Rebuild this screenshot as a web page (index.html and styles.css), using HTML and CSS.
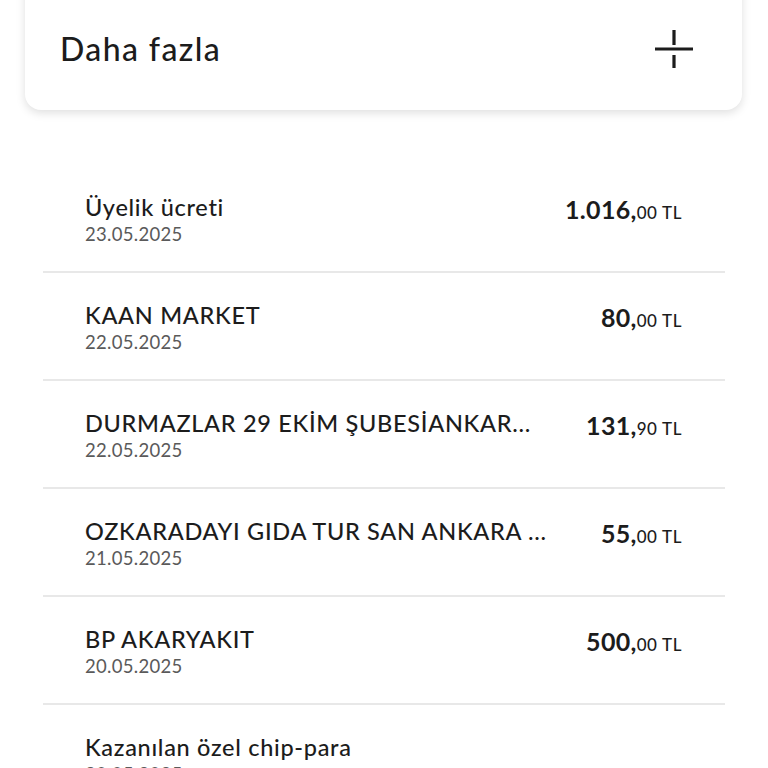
FILE: index.html
```html
<!DOCTYPE html>
<html>
<head>
    <meta http-equiv="Content-Type" content="text/html; charset=utf-8" />
    <title>Hesap hareketleri</title>
    <link rel="stylesheet" href="styles.css">
</head>
<body>
  <div class="page">
    <div class="more-card">
      <span class="more-title">Daha fazla</span>
      <svg class="plus-icon" width="38" height="38" viewBox="0 0 38 38">
        <path d="M19 0 V15 M0 19 H38 M19 25 V38" stroke="#1c1c1c" stroke-width="3.2" fill="none"/>
      </svg>
    </div>

    <div class="tx-list">
      <div class="tx-row">
        <div class="tx-info">
          <div class="tx-title">Üyelik ücreti</div>
          <div class="tx-date">23.05.2025</div>
        </div>
        <div class="tx-amount">1.016,<span class="tx-cents">00 TL</span></div>
      </div>
      <div class="tx-row">
        <div class="tx-info">
          <div class="tx-title">KAAN MARKET</div>
          <div class="tx-date">22.05.2025</div>
        </div>
        <div class="tx-amount">80,<span class="tx-cents">00 TL</span></div>
      </div>
      <div class="tx-row">
        <div class="tx-info">
          <div class="tx-title">DURMAZLAR 29 EKİM ŞUBESİANKAR...</div>
          <div class="tx-date">22.05.2025</div>
        </div>
        <div class="tx-amount">131,<span class="tx-cents">90 TL</span></div>
      </div>
      <div class="tx-row">
        <div class="tx-info">
          <div class="tx-title">OZKARADAYI GIDA TUR SAN ANKARA ...</div>
          <div class="tx-date">21.05.2025</div>
        </div>
        <div class="tx-amount">55,<span class="tx-cents">00 TL</span></div>
      </div>
      <div class="tx-row">
        <div class="tx-info">
          <div class="tx-title">BP AKARYAKIT</div>
          <div class="tx-date">20.05.2025</div>
        </div>
        <div class="tx-amount">500,<span class="tx-cents">00 TL</span></div>
      </div>
      <div class="tx-row">
        <div class="tx-info">
          <div class="tx-title">Kazanılan özel chip-para</div>
          <div class="tx-date">20.05.2025</div>
        </div>
        <div class="tx-amount"></div>
      </div>
    </div>
  </div>
</body>
</html>
```

FILE: styles.css
```css
body {
    margin: 0;
    background-color: #ffffff;
    font-family: Lato, "Noto Sans", sans-serif;
    color: #1c1c1c;
    overflow: hidden;
}

.page {
    padding: 0 26px 0 25px;
}

.more-card {
    display: flex;
    justify-content: space-between;
    align-items: center;
    margin-top: -20px;
    padding: 50px 49px 42px 35px;
    background-color: #fff;
    border-radius: 0 0 16px 16px;
    box-shadow: 0 3px 10px rgba(0, 0, 0, 0.13);
}

.more-title {
    font-size: 32px;
    line-height: 38px;
    font-weight: 500;
    letter-spacing: 1.4px;
}

.plus-icon {
    display: block;
}

.tx-list {
    margin: 55px 17px 0 18px;
}

.tx-row {
    display: flex;
    justify-content: space-between;
    align-items: flex-start;
    padding: 29px 43px 25px 42px;
    border-bottom: 2px solid #e8e8e8;
}

.tx-info {
    min-width: 0;
}

.tx-title {
    font-size: 23.5px;
    line-height: 26px;
    font-weight: 500;
    letter-spacing: 0.7px;
    white-space: nowrap;
}

.tx-date {
    margin-top: 2px;
    font-size: 18.5px;
    line-height: 24px;
    letter-spacing: 0.3px;
    color: #5a5a5a;
}

.tx-amount {
    flex-shrink: 0;
    font-size: 25px;
    line-height: 30px;
    font-weight: 700;
    letter-spacing: 0.3px;
}

.tx-cents {
    font-size: 17px;
    font-weight: 500;
    letter-spacing: 0.6px;
}
```
